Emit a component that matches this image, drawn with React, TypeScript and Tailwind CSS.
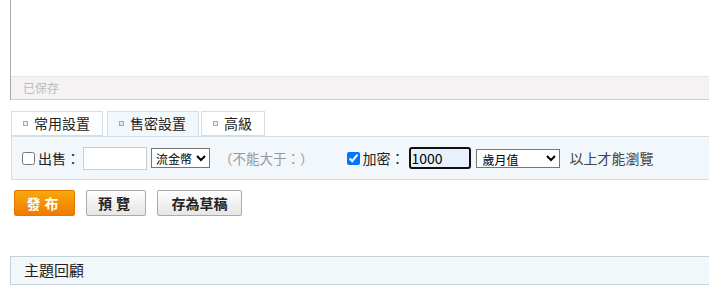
import React from 'react';

const FONT = "font-['Microsoft_JhengHei','Noto_Sans_CJK_TC','Noto_Sans',sans-serif]";

function Tab({ label, active }: { label: string; active?: boolean }) {
  return (
    <div
      className={`flex h-[25px] items-center gap-[6px] border border-[#d3dfe8] pl-[11px] pr-[12px] text-[14px] text-[#222] ${
        active ? 'mb-[-1px] border-b-[#f1f7fb] bg-[#f1f7fb]' : 'bg-white'
      }`}
    >
      <span className={`inline-block h-[5px] w-[5px] border ${active ? 'border-[#9ab0c2] bg-[#dbe7f0]' : 'border-[#aaa] bg-[#eee]'}`} />
      {label}
    </div>
  );
}

export default function App() {
  return (
    <div className={`w-[709px] h-[307px] overflow-hidden bg-white ${FONT}`}>
      {/* editor + status bar */}
      <div className="ml-[10px] w-[720px] border-l border-[#a9a9a9]">
        <div className="h-[76px] bg-white" />
        <div className="flex h-[24px] items-center border-t border-b border-t-[#e6e6e6] border-b-[#cfcfcf] bg-[#f4f2f2] pl-[12px] text-[12px] text-[#bbb]">
          已保存
        </div>
      </div>

      {/* tabs */}
      <div className="ml-[11px] mt-[11px] flex">
        <Tab label="常用設置" />
        <div className="ml-[4px]">
          <Tab label="售密設置" active />
        </div>
        <div className="ml-[2px]">
          <Tab label="高級" />
        </div>
      </div>
      <div className="ml-[11px] flex h-[44px] w-[710px] items-center border border-[#d3dfe8] bg-[#f1f7fb] pl-[10px] text-[14px] text-[#222]">
        <input type="checkbox" className="m-0 h-[13px] w-[13px]" />
        <span className="ml-[3px]">出售：</span>
        <input type="text" className="ml-[3px] h-[23px] w-[64px] border border-[#ccc] bg-white" />
        <select className="ml-[4px] h-[20px] w-[59px] border border-[#767676] bg-white px-0 text-[12px] text-black">
          <option>流金幣</option>
        </select>
        <span className="ml-[9px] text-[13.5px] text-[#999]">（不能大于：）</span>
        <input type="checkbox" defaultChecked className="m-0 ml-[33px] h-[13px] w-[13px]" />
        <span className="ml-[3px]">加密：</span>
        <input
          type="text"
          defaultValue="1000"
          className="ml-[4px] h-[22px] w-[62px] rounded-[3px] border-2 border-[#101010] bg-[#e8f0fe] px-[1px] text-[14px] text-black outline-none"
        />
        <select className="ml-[5px] h-[19px] w-[84px] border border-[#767676] bg-white px-[2px] text-[12px] text-black">
          <option>歲月值</option>
        </select>
        <span className="ml-[10px] text-[#444]">以上才能瀏覽</span>
      </div>

      {/* buttons */}
      <div className="ml-[14px] mt-[10px] flex gap-[11px]">
        <button className="h-[26px] w-[61px] rounded-[2px] border border-[#e37a00] bg-gradient-to-b from-[#f9a80d] to-[#ee7a00] text-[14px] font-bold tracking-[4px] text-white">
          發布
        </button>
        <button className="h-[26px] w-[60px] rounded-[2px] border border-[#aaa] bg-gradient-to-b from-[#fdfdfd] to-[#e6e6e6] text-[14px] font-bold tracking-[4px] text-[#222]">
          預覽
        </button>
        <button className="h-[26px] w-[85px] rounded-[2px] border border-[#aaa] bg-gradient-to-b from-[#fdfdfd] to-[#e6e6e6] text-[14px] font-bold text-[#222]">
          存為草稿
        </button>
      </div>

      {/* thread review bar */}
      <div className="ml-[10px] mt-[40px] flex h-[29px] w-[710px] items-center border border-[#c3d1db] bg-[#f2f7fa] pl-[13px] text-[15px] text-[#222]">
        主題回顧
      </div>
    </div>
  );
}
